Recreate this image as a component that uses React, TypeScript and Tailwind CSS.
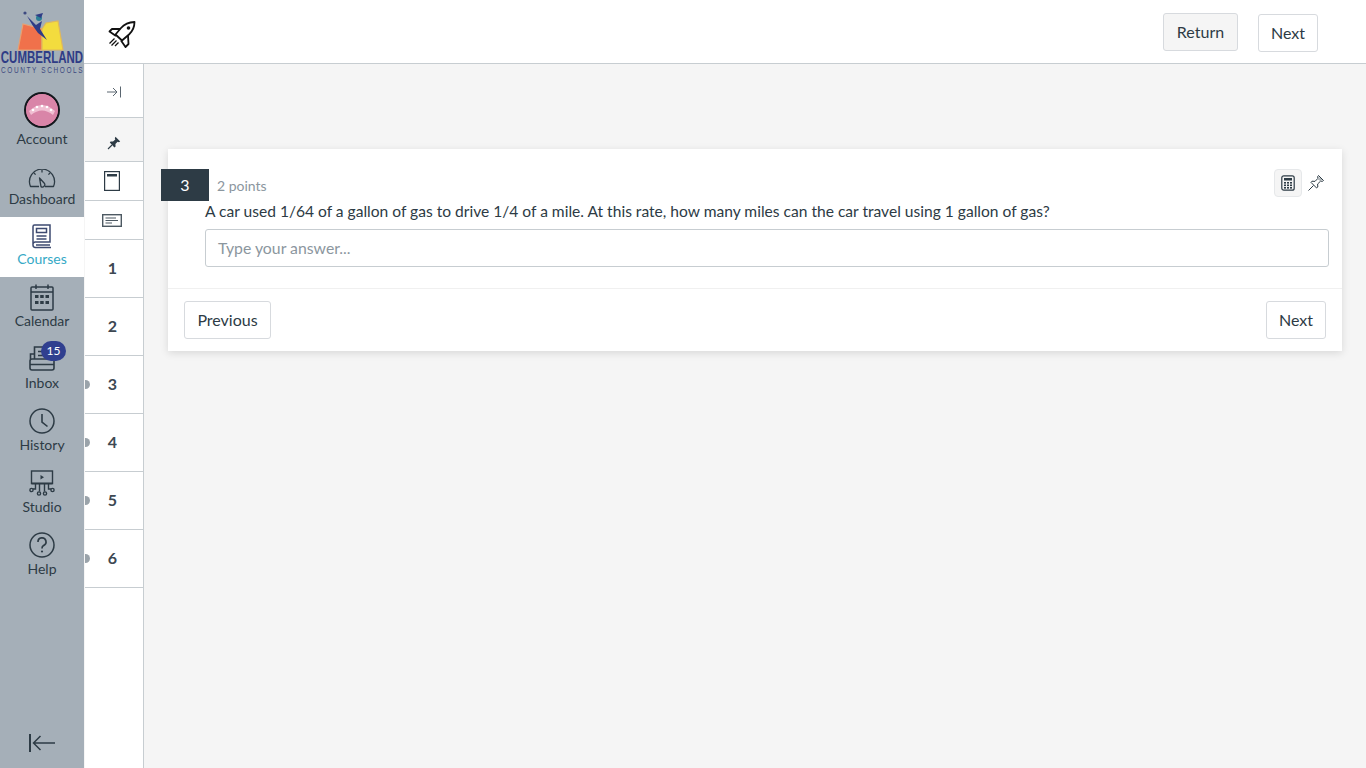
import React from "react";

const stroke = "#2d3b45";

function Logo() {
  return (
    <svg width="84" height="75" viewBox="0 0 84 75" className="block">
      <polygon points="18,50 23,24 42,29 42,50" fill="#f0714b" stroke="#e8a070" strokeWidth="1.2" />
      <polygon points="42,29 46,23 58,21 63,50 42,50" fill="#f3dc3e" stroke="#e0b85a" strokeWidth="1.2" />
      <path d="M27 16 L36 25 L42 21 L40 29 L47 40 L38 33 L33 26 Z" fill="#2f3c86" />
      <circle cx="39" cy="18" r="3" fill="#2b7f96" />
      <path d="M35 15 L43 13 L41 18 Z" fill="#2f3c86" />
      <circle cx="25" cy="13" r="1.6" fill="#3d4a80" />
      <text transform="translate(0.8 63) scale(1 1.45)" fontFamily="'Liberation Sans', sans-serif" fontWeight="700" fontSize="11.5" fill="#2f3c86">CUMBERLAND</text>
      <text transform="translate(1 72.5) scale(1 1.4)" letterSpacing="1.6" fontFamily="'Liberation Sans', sans-serif" fontSize="6.5" fill="#3d4a80">COUNTY SCHOOLS</text>
    </svg>
  );
}

function Avatar() {
  return (
    <div className="w-9 h-9 rounded-full border-2 border-[#14181d] bg-[#d97fa3] overflow-hidden flex items-center justify-center">
      <svg width="32" height="32" viewBox="0 0 32 32">
        <circle cx="16" cy="16" r="16" fill="#d985a8" />
        <path d="M3 17 Q16 5 29 17 L27 21 Q16 12 5 21 Z" fill="#f0bfd2" />
        <circle cx="7" cy="16" r="1.3" fill="#fff" />
        <circle cx="11" cy="13" r="1.3" fill="#fff" />
        <circle cx="16" cy="12" r="1.3" fill="#fff" />
        <circle cx="21" cy="13" r="1.3" fill="#fff" />
        <circle cx="25" cy="16" r="1.3" fill="#fff" />
      </svg>
    </div>
  );
}

function DashIcon() {
  return (
    <svg width="28" height="19" viewBox="0 0 28 19" fill="none" stroke={stroke} strokeWidth="1.3" strokeLinejoin="round">
      <path d="M11 17.5 H2.5 A12.5 12.5 0 1 1 25.5 17.5 H17" />
      <path d="M11.5 9 L16.3 14.2 A2.4 2.4 0 0 1 13 17.6 Z" />
      <path d="M14 1 V3.5 M6 4 L7.6 5.6 M22 4 L20.4 5.6" />
    </svg>
  );
}

function BookIcon() {
  return (
    <svg width="22" height="25" viewBox="0 0 22 25" fill="none" stroke="#3d4a70" strokeWidth="1.5">
      <path d="M2 21 V2.5 A1.5 1.5 0 0 1 3.5 1 H19 V18 H4 A2.5 2.5 0 0 0 2 21 A2.5 2.5 0 0 0 4 23.5 H20" />
      <rect x="5.5" y="4.5" width="10" height="4" />
      <path d="M5.5 12 H15.5 M5.5 15 H15.5 M5 21 H19" />
    </svg>
  );
}

function CalendarIcon() {
  return (
    <svg width="24" height="27" viewBox="0 0 24 27" fill="none" stroke={stroke} strokeWidth="1.5">
      <rect x="1" y="3" width="22" height="23" rx="1" />
      <path d="M1 8 H23 M6 0.5 V5 M18 0.5 V5" />
      <g fill={stroke} stroke="none">
        <rect x="5" y="11" width="3.5" height="3" /><rect x="10.2" y="11" width="3.5" height="3" /><rect x="15.5" y="11" width="3.5" height="3" />
        <rect x="5" y="17" width="3.5" height="3" /><rect x="10.2" y="17" width="3.5" height="3" /><rect x="15.5" y="17" width="3.5" height="3" />
      </g>
    </svg>
  );
}

function InboxIcon() {
  return (
    <svg width="26" height="25" viewBox="0 0 26 25" fill="none" stroke={stroke} strokeWidth="1.6" className="mb-[2px]">
      <path d="M5.5 13 V1 H21 V13" />
      <path d="M5.5 8 H1.5 V13" />
      <rect x="1" y="13" width="24" height="11" rx="2" />
      <path d="M1 18.5 H25 M9 5.5 H14 M9 9.5 H18" />
    </svg>
  );
}

function ClockIcon() {
  return (
    <svg width="26" height="26" viewBox="0 0 26 26" fill="none" stroke={stroke} strokeWidth="1.5" className="mb-[1px]">
      <circle cx="13" cy="13" r="12" />
      <path d="M13 6 V14 L18.5 18.5" strokeWidth="1.6" />
    </svg>
  );
}

function StudioIcon() {
  return (
    <svg width="26" height="27" viewBox="0 0 26 27" fill="none" stroke={stroke} strokeWidth="1.4">
      <rect x="2.5" y="1" width="21" height="12.5" />
      <path d="M2.5 13.5 H23.5" strokeWidth="1.8" />
      <path d="M11.5 5 L15 7.2 L11.5 9.4 Z" fill={stroke} stroke="none" />
      <path d="M6.5 14 V19 H4 M10.5 14 V21.5 M15.5 14 V21.5 M19.5 14 V19 H22" />
      <circle cx="2.5" cy="20" r="1.6" />
      <circle cx="10" cy="23.5" r="1.6" />
      <circle cx="16" cy="23.5" r="1.6" />
      <circle cx="23.5" cy="20" r="1.6" />
    </svg>
  );
}

function HelpIcon() {
  return (
    <svg width="26" height="26" viewBox="0 0 26 26" fill="none" stroke={stroke} strokeWidth="1.5" className="mb-[1px]">
      <circle cx="13" cy="13" r="12" />
      <path d="M9 10 A4 4 0 1 1 14.5 13.6 C13.4 14.2 13 14.9 13 16.5" strokeWidth="1.7" />
      <circle cx="13" cy="19.5" r="1.1" fill={stroke} stroke="none" />
    </svg>
  );
}

function Rocket() {
  return (
    <svg width="30" height="30" viewBox="0 0 30 30" fill="none" stroke="#111" strokeWidth="1.8" strokeLinejoin="round">
      <path d="M27.5 3 C22 3.2 17.5 5 14 9 L8.5 15.5 L15 21.5 L22 15.5 C25.8 12 27.5 8 27.5 3 Z" />
      <path d="M13 10 H5 L2.5 12.5 L9 17" />
      <path d="M21 16.5 L21.5 25 L18.5 28 L14 21.5" />
      <circle cx="21.5" cy="9" r="1.8" fill="#111" stroke="none" />
      <path d="M7.5 19.5 L2.5 24.5 M9.5 21.5 L4.5 26.5 M11.5 23.5 L8 27" strokeWidth="1.3" />
    </svg>
  );
}

function SolidPin() {
  return (
    <svg width="14" height="14" viewBox="0 0 14 14">
      <path d="M8.5 0.8 L13.2 5.5 L11.8 6.3 L10.6 5.8 L8.4 8 L8.6 10.6 L7.4 11.4 L2.8 6.6 L3.6 5.6 L6 5.6 L8.3 3.4 L7.8 2.2 Z" fill="#2d3b45" />
      <path d="M5 9 L1 13" stroke="#2d3b45" strokeWidth="1.1" />
    </svg>
  );
}

function OutlinePin() {
  return (
    <svg width="18" height="18" viewBox="0 0 18 18" fill="none" stroke="#2d3b45" strokeWidth="1">
      <path d="M11.5 1.5 L16.5 6.5 L15.2 7.4 L13.7 7 L10.6 10 L10.8 13 L9.6 14 L4 8.4 L5 7.2 L8 7.4 L11 4.3 L10.6 2.8 Z" />
      <path d="M6.5 11.5 L1.5 16.5" />
      <path d="M12 3.5 L14.5 6 M11.5 5 L13 6.5" strokeWidth="0.7" />
    </svg>
  );
}

function CalcIcon() {
  return (
    <svg width="14" height="16" viewBox="0 0 14 16" fill="none" stroke="#2d3b45" strokeWidth="1.2">
      <rect x="0.8" y="0.8" width="12.4" height="14.4" rx="2" />
      <rect x="3" y="3" width="8" height="2.5" fill="#2d3b45" stroke="none" />
      <g fill="#2d3b45" stroke="none">
        <rect x="3" y="7" width="2" height="1.6" /><rect x="6" y="7" width="2" height="1.6" /><rect x="9" y="7" width="2" height="1.6" />
        <rect x="3" y="9.5" width="2" height="1.6" /><rect x="6" y="9.5" width="2" height="1.6" /><rect x="9" y="9.5" width="2" height="1.6" />
        <rect x="3" y="12" width="2" height="1.6" /><rect x="6" y="12" width="2" height="1.6" /><rect x="9" y="12" width="2" height="1.6" />
      </g>
    </svg>
  );
}

function NavItem({ icon, label }: { icon: React.ReactNode; label: string }) {
  return (
    <div className="h-[62px] flex flex-col items-center">
      <div className="h-[27px] flex items-end justify-center relative">{icon}</div>
      <div className="text-[14px] leading-[20px] text-[#2d3b45]">{label}</div>
    </div>
  );
}

const numbers = [
  { n: "1", dot: false },
  { n: "2", dot: false },
  { n: "3", dot: true },
  { n: "4", dot: true },
  { n: "5", dot: true },
  { n: "6", dot: true },
];

export default function App() {
  return (
    <div className="flex h-[768px] w-[1366px] overflow-hidden bg-[#f5f5f5] text-[#2d3b45]" style={{ fontFamily: "Lato, 'Liberation Sans', sans-serif" }}>
      <aside className="w-[84px] shrink-0 bg-[#a5afb8] flex flex-col">
        <Logo />
        <div className="mt-[17px] h-[66px] flex flex-col items-center">
          <Avatar />
          <div className="mt-[1px] text-[14px] leading-[20px]">Account</div>
        </div>
        <div className="mt-[8px] h-[50px] flex flex-col items-center">
          <div className="h-[22px] flex items-end"><DashIcon /></div>
          <div className="mt-[1px] text-[14px] leading-[20px]">Dashboard</div>
        </div>
        <div className="mt-[1px] bg-white h-[60px] flex flex-col items-center pt-[7px]">
          <BookIcon />
          <div className="text-[14px] leading-[20px] text-[#35a9c6]">Courses</div>
        </div>
        <div className="mt-[7px]">
          <NavItem icon={<CalendarIcon />} label="Calendar" />
        </div>
        <NavItem
          label="Inbox"
          icon={
            <>
              <InboxIcon />
              <span className="absolute left-[12px] top-[-5px] w-[25px] h-[20px] rounded-full bg-[#303f8f] text-white text-[12px] leading-[20px] text-center">15</span>
            </>
          }
        />
        <NavItem icon={<ClockIcon />} label="History" />
        <NavItem icon={<StudioIcon />} label="Studio" />
        <NavItem icon={<HelpIcon />} label="Help" />
        <div className="mt-auto h-[36px] flex justify-center pt-[1px]">
          <svg width="28" height="20" viewBox="0 0 28 20" fill="none" stroke="#2d3b45" strokeWidth="1.5">
            <path d="M2 1 V19" strokeWidth="2" />
            <path d="M27 10 H6 M12.5 3 L5.5 10 L12.5 17" />
          </svg>
        </div>
      </aside>
      <div className="flex-1 flex flex-col min-w-0">
        <header className="h-[64px] shrink-0 bg-white border-b border-[#c7cdd1] flex items-center pl-[23px] pr-[48px] pt-[4px]">
          <Rocket />
          <div className="ml-auto flex items-start gap-[20px]">
            <div className="mt-[-2px] w-[75px] h-[38px] flex items-center justify-center bg-[#f5f5f5] border border-[#d7dade] rounded-[3px] text-[16px]">Return</div>
            <div className="mt-[-1px] h-[38px] px-[12px] flex items-center bg-white border border-[#d7dade] rounded-[3px] text-[16px]">Next</div>
          </div>
        </header>
        <div className="flex-1 flex min-h-0">
          <nav className="ml-[1px] w-[59px] shrink-0 bg-white border-r border-[#c7cdd1] flex flex-col">
            <div className="h-[54px] border-b border-[#c7cdd1] flex items-center justify-center pt-[2px]">
              <svg width="16" height="12" viewBox="0 0 16 12" fill="none" stroke="#5a6670" strokeWidth="1" className="mr-[1px]">
                <path d="M1 6 H11 M7 2 L11 6 L7 10" />
                <path d="M14.5 0.5 V11.5" />
              </svg>
            </div>
            <div className="h-[44px] bg-[#f5f5f5] border-b border-[#c7cdd1] flex items-end justify-center pb-[11px]"><SolidPin /></div>
            <div className="h-[39px] border-b border-[#c7cdd1] flex items-center justify-center">
              <svg width="16" height="20" viewBox="0 0 16 20" fill="none" stroke="#2d3b45" strokeWidth="1.2" className="mr-[4px]">
                <rect x="0.6" y="0.6" width="14.8" height="18.8" />
                <rect x="3" y="3" width="10" height="2.5" fill="#2d3b45" stroke="none" />
              </svg>
            </div>
            <div className="h-[39px] border-b border-[#c7cdd1] flex items-center justify-center">
              <svg width="20" height="13" viewBox="0 0 20 13" fill="none" stroke="#4d5962" strokeWidth="1.4" className="mr-[4px]">
                <rect x="0.7" y="0.7" width="18.6" height="11.6" />
                <path d="M3.5 4 H14 M3.5 6.5 H16 M3.5 9 H10" strokeWidth="1.1" />
              </svg>
            </div>
            {numbers.map((item) => (
              <div key={item.n} className="relative h-[58px] border-b border-[#c7cdd1] flex items-center justify-center pr-[3px] pb-[2px] font-bold text-[16px] text-[#3d4852]">
                {item.dot && <span className="absolute left-[0px] top-[24px] w-[5px] h-[9px] rounded-r-full bg-[#9aa3aa]" />}
                {item.n}
              </div>
            ))}
          </nav>
          <main className="flex-1 pl-[24px] pr-[24px] pt-[85px]">
            <section className="relative bg-white shadow-[0_2px_8px_rgba(0,0,0,0.12)] h-[202px] flex flex-col">
              <div className="flex items-center h-[32px] mt-[20px] ml-[-7px]">
                <div className="w-[48px] h-[32px] bg-[#2d3b45] text-white text-[16px] flex items-center justify-center">3</div>
                <div className="ml-[8px] text-[14px] text-[#8b969e]">2 points</div>
                <div className="ml-auto mr-[17px] mt-[-4px] flex items-center gap-[5px]">
                  <div className="w-[28px] h-[28px] bg-[#f5f5f5] border border-[#e6e8ea] rounded-[4px] flex items-center justify-center"><CalcIcon /></div>
                  <OutlinePin />
                </div>
              </div>
              <div className="ml-[37px] mt-[-1px] text-[15.58px] leading-[22px] h-[22px]">A car used 1/64 of a gallon of gas to drive 1/4 of a mile. At this rate, how many miles can the car travel using 1 gallon of gas?</div>
              <div className="ml-[37px] mr-[13px] mt-[7px] h-[38px] border border-[#c7cdd1] rounded-[3px] flex items-center pl-[12px] text-[15.8px] text-[#8b969e]">Type your answer...</div>
              <div className="mt-[21px] h-[62px] border-t border-[#f0f0f0] flex items-start justify-between px-[16px] pt-[12px]">
                <div className="w-[87px] h-[38px] flex items-center justify-center border border-[#d7dade] rounded-[3px] text-[16px]">Previous</div>
                <div className="h-[38px] px-[12px] flex items-center border border-[#d7dade] rounded-[3px] text-[16px]">Next</div>
              </div>
            </section>
          </main>
        </div>
      </div>
    </div>
  );
}
